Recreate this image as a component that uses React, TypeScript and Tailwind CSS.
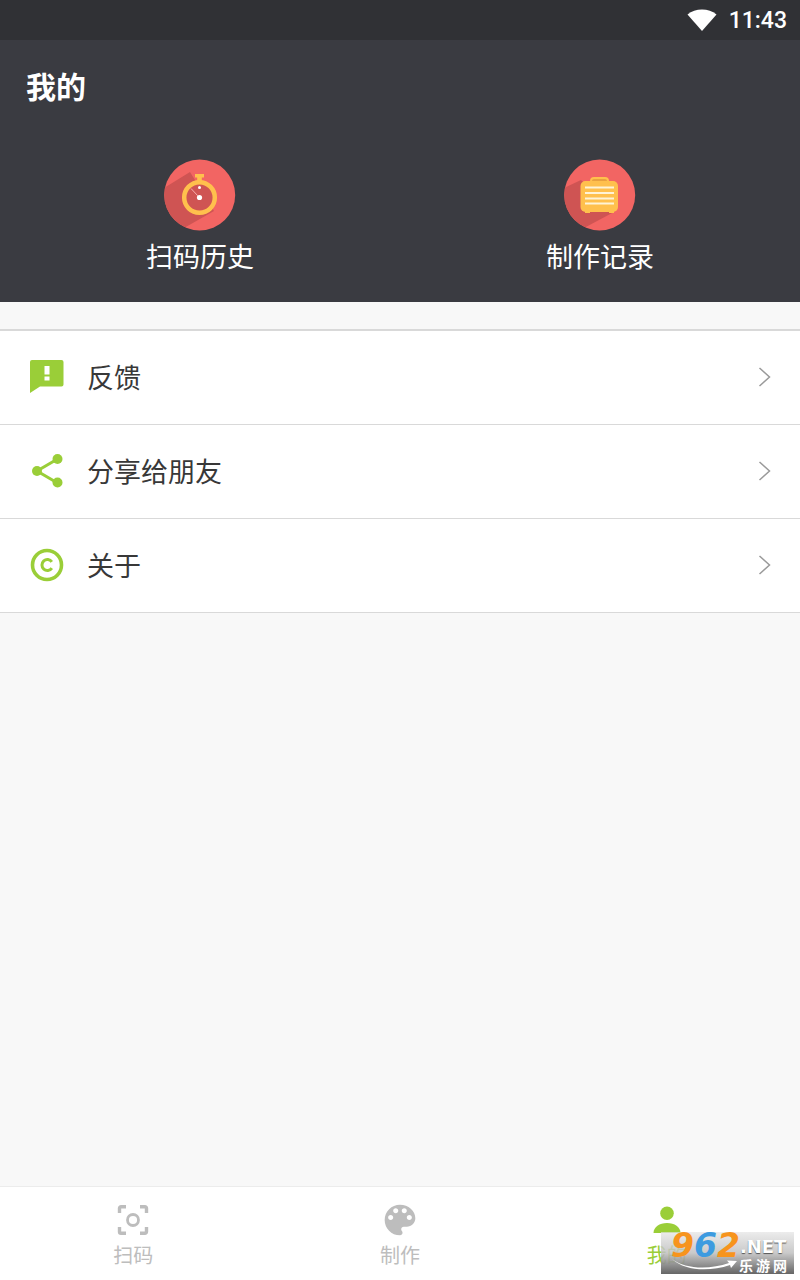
import React from "react";

const cjk = "font-['Noto_Sans_CJK_SC','Liberation_Sans',sans-serif]";

function Timer() {
  return (
    <svg width="72" height="72" viewBox="0 0 72 72" className="block">
      <defs>
        <clipPath id="c1"><circle cx="35.700" cy="36" r="35.500" /></clipPath>
      </defs>
      <circle cx="35.700" cy="36" r="35.500" fill="#f26563" />
      <path d="M0 29 L26 13 L50 52 L20 69 L0 55 Z" fill="#cf5453" clipPath="url(#c1)" />
      <path d="M31 15h9v3.500h-2.200v4.500h-4.600v-4.500H31z" fill="#ffc04d" />
      <circle cx="35.500" cy="38.500" r="15.300" fill="#cf5453" stroke="#ffc04d" strokeWidth="4.500" />
      <circle cx="35.500" cy="38.500" r="2.600" fill="#fff" />
      <circle cx="35.500" cy="28.500" r="1.500" fill="#fff" />
      <path d="M34 37 L27 29.500" stroke="#f7b0ad" strokeWidth="1" />
    </svg>
  );
}

function Case() {
  return (
    <svg width="72" height="72" viewBox="0 0 72 72" className="block">
      <defs>
        <clipPath id="c2"><circle cx="35.700" cy="36" r="35.500" /></clipPath>
      </defs>
      <circle cx="35.700" cy="36" r="35.500" fill="#f26563" />
      <path d="M0 29 L17 21 L50 53 L20 69 L0 55 Z" fill="#cf5453" clipPath="url(#c2)" />
      <path d="M27 22 q0 -3 3 -3 h11 q3 0 3 3" fill="#e9a13f" stroke="#ffc04d" strokeWidth="2" />
      <rect x="16.500" y="22" width="37.500" height="31" rx="5" fill="#ffc04d" />
      <rect x="21" y="52" width="5" height="2" fill="#ffc04d" />
      <rect x="45" y="52" width="5" height="2" fill="#ffc04d" />
      <g fill="#fff3d6">
        <rect x="21" y="27.500" width="29" height="2" />
        <rect x="21" y="33" width="29" height="2" />
        <rect x="21" y="38.500" width="29" height="2" />
        <rect x="21" y="43.500" width="29" height="2" />
      </g>
    </svg>
  );
}

function Feedback() {
  return (
    <svg width="36" height="36" viewBox="0 0 36 36" className="block">
      <path d="M3 1h29.500a2 2 0 0 1 2 2v22.500a2 2 0 0 1 -2 2H11L1 34V3a2 2 0 0 1 2 -2z" fill="#9ace38" />
      <rect x="15.500" y="7" width="5" height="8.500" fill="#fff" />
      <rect x="15.500" y="17.500" width="5" height="4" fill="#fff" />
    </svg>
  );
}

function Share() {
  return (
    <svg width="36" height="36" viewBox="0 0 36 36" className="block">
      <path d="M28.500 6 L8 18 L28.500 30" fill="none" stroke="#9ace38" strokeWidth="3" />
      <circle cx="28.500" cy="6" r="5" fill="#9ace38" />
      <circle cx="8" cy="18" r="5" fill="#9ace38" />
      <circle cx="28.500" cy="29.500" r="5" fill="#9ace38" />
    </svg>
  );
}

function Copy() {
  return (
    <svg width="36" height="36" viewBox="0 0 36 36" className="block">
      <circle cx="18" cy="18" r="14.500" fill="none" stroke="#9ace38" strokeWidth="3.600" />
      <path d="M22.800 14.800 A5.400 5.600 0 1 0 22.800 21.200" fill="none" stroke="#9ace38" strokeWidth="3" />
    </svg>
  );
}

function Chevron() {
  return (
    <svg width="14" height="20" viewBox="0 0 14 20" className="block">
      <path d="M1.500 1 L11.500 10 L1.500 19" fill="none" stroke="#9a9a9a" strokeWidth="1.500" />
    </svg>
  );
}

function Scan() {
  return (
    <svg width="32" height="32" viewBox="0 0 32 32" className="block">
      <g fill="none" stroke="#bdbdbd" strokeWidth="3.400">
        <path d="M9 2.700H4a1.500 1.500 0 0 0 -1.500 1.500V9" />
        <path d="M23 2.700h5a1.500 1.500 0 0 1 1.500 1.500V9" />
        <path d="M9 29.300H4a1.500 1.500 0 0 1 -1.500 -1.500V23" />
        <path d="M23 29.300h5a1.500 1.500 0 0 0 1.500 -1.500V23" />
        <circle cx="16" cy="16" r="5.500" strokeWidth="2.800" />
      </g>
    </svg>
  );
}

function Palette() {
  return (
    <svg width="32" height="32" viewBox="0 0 24 24" className="block">
      <path
        fill="#bdbdbd"
        d="M12 0.500C5.600 0.500 0.500 5.600 0.500 12S5.600 23.500 12 23.500c1.100 0 1.900-0.800 1.900-1.900 0-0.500-0.200-1-0.500-1.300-0.300-0.300-0.500-0.800-0.500-1.300 0-1.100 0.800-1.900 1.900-1.900h2.300c3.500 0 6.400-2.900 6.400-6.400C23.500 5 18.300 0.500 12 0.500zM5 12c-1.100 0-1.900-0.800-1.900-1.900S3.900 8.200 5 8.200s1.900 0.800 1.900 1.900S6.100 12 5 12zm3.800-5.100c-1.100 0-1.900-0.800-1.900-1.900s0.800-1.900 1.900-1.900 1.900 0.800 1.900 1.900-0.800 1.900-1.900 1.900zm6.400 0c-1.100 0-1.900-0.800-1.900-1.900s0.800-1.900 1.900-1.900 1.900 0.800 1.900 1.900-0.800 1.900-1.900 1.900zm3.800 5.100c-1.100 0-1.900-0.800-1.900-1.900s0.800-1.900 1.900-1.900 1.900 0.800 1.900 1.900-0.800 1.900-1.900 1.900z"
      />
    </svg>
  );
}

function Person() {
  return (
    <svg width="32" height="32" viewBox="0 0 32 32" className="block">
      <circle cx="16" cy="9.300" r="6.800" fill="#9ace38" />
      <path d="M2.500 29c0-6 6-10 13.500-10s13.500 4 13.500 10z" fill="#9ace38" />
    </svg>
  );
}

function Wifi() {
  return (
    <svg width="30" height="22" viewBox="0 0 30 22" className="block">
      <path d="M0.500 5.500C4.500 2 9.500 0.500 15 0.500S25.500 2 29.500 5.500L15 22z" fill="#fff" />
    </svg>
  );
}

function Swoosh() {
  return (
    <svg width="66" height="12" viewBox="0 0 66 12" className="block">
      <path d="M1 1 C14 11 38 12 58 5 L56 2.500 L66 3 L60 10 L59 7 C38 14 14 13 1 1z" fill="#fff" />
    </svg>
  );
}

const rows = [
  { icon: <Feedback />, label: "反馈" },
  { icon: <Share />, label: "分享给朋友" },
  { icon: <Copy />, label: "关于" },
];

export default function App() {
  return (
    <div className={`relative flex h-[1280px] w-[800px] flex-col overflow-hidden bg-[#f8f8f8] ${cjk}`}>
      <div className="flex h-10 items-center justify-end gap-[12px] bg-[#303135] pr-[13px]">
        <Wifi />
        <span className="font-['Roboto',sans-serif] text-[23px] font-medium leading-none text-white">11:43</span>
      </div>
      <div className="flex h-[262px] flex-col bg-[#3a3b41]">
        <div className="h-[119px] pl-[26px] pt-[23px] text-[30px] font-bold leading-[44px] text-white">我的</div>
        <div className="flex">
          <div className="flex flex-1 flex-col items-center">
            <Timer />
            <span className="mt-[5px] text-[27px] leading-[40px] text-white">扫码历史</span>
          </div>
          <div className="flex flex-1 flex-col items-center">
            <Case />
            <span className="mt-[5px] text-[27px] leading-[40px] text-white">制作记录</span>
          </div>
        </div>
      </div>
      <div className="mt-[27px] flex flex-col border-t-2 border-[#d9d9d9] bg-white">
        {rows.map((r) => (
          <div key={r.label} className="flex h-[94px] items-center border-b border-[#d9d9d9] pb-[2px] pl-[29px] pr-[28px]">
            {r.icon}
            <span className="ml-[22px] flex-1 text-[27px] leading-none text-[#383838]">{r.label}</span>
            <Chevron />
          </div>
        ))}
      </div>
      <div className="flex-1" />
      <div className="grid h-[94px] grid-cols-3 border-t border-[#ececec] bg-white">
        <div className="flex flex-col items-center pt-[17px]">
          <Scan />
          <span className="mt-[4px] text-[20px] leading-[30px] text-[#bdbdbd]">扫码</span>
        </div>
        <div className="flex flex-col items-center pt-[17px]">
          <Palette />
          <span className="mt-[4px] text-[20px] leading-[30px] text-[#bdbdbd]">制作</span>
        </div>
        <div className="flex flex-col items-center pt-[17px]">
          <Person />
          <span className="mt-[4px] text-[20px] leading-[30px] text-[#9ace38]">我的</span>
        </div>
      </div>
      <div className="absolute left-[661px] top-[1232px] h-[42px] w-[133px] bg-gradient-to-b from-[#e4e4e4]/70 via-[#c0c0c0]/85 to-[#666666]">
        <div className="flex h-[26px] items-center pl-[10px] font-['DejaVu_Sans',sans-serif] font-bold italic leading-none">
          <span className="text-[33px] text-[#f7941d]">9</span>
          <span className="text-[33px] text-[#3d9be0]">6</span>
          <span className="text-[33px] text-[#f7941d]">2</span>
          <span className="mt-[3px] text-[18px] not-italic text-white [text-shadow:0_1px_1px_#555]">.NET</span>
        </div>
        <div className="flex items-start pl-[10px]">
          <Swoosh />
          <span className="-mt-[1px] ml-[2px] text-[14px] font-bold leading-[16px] tracking-[3px] text-white">乐游网</span>
        </div>
      </div>
    </div>
  );
}
